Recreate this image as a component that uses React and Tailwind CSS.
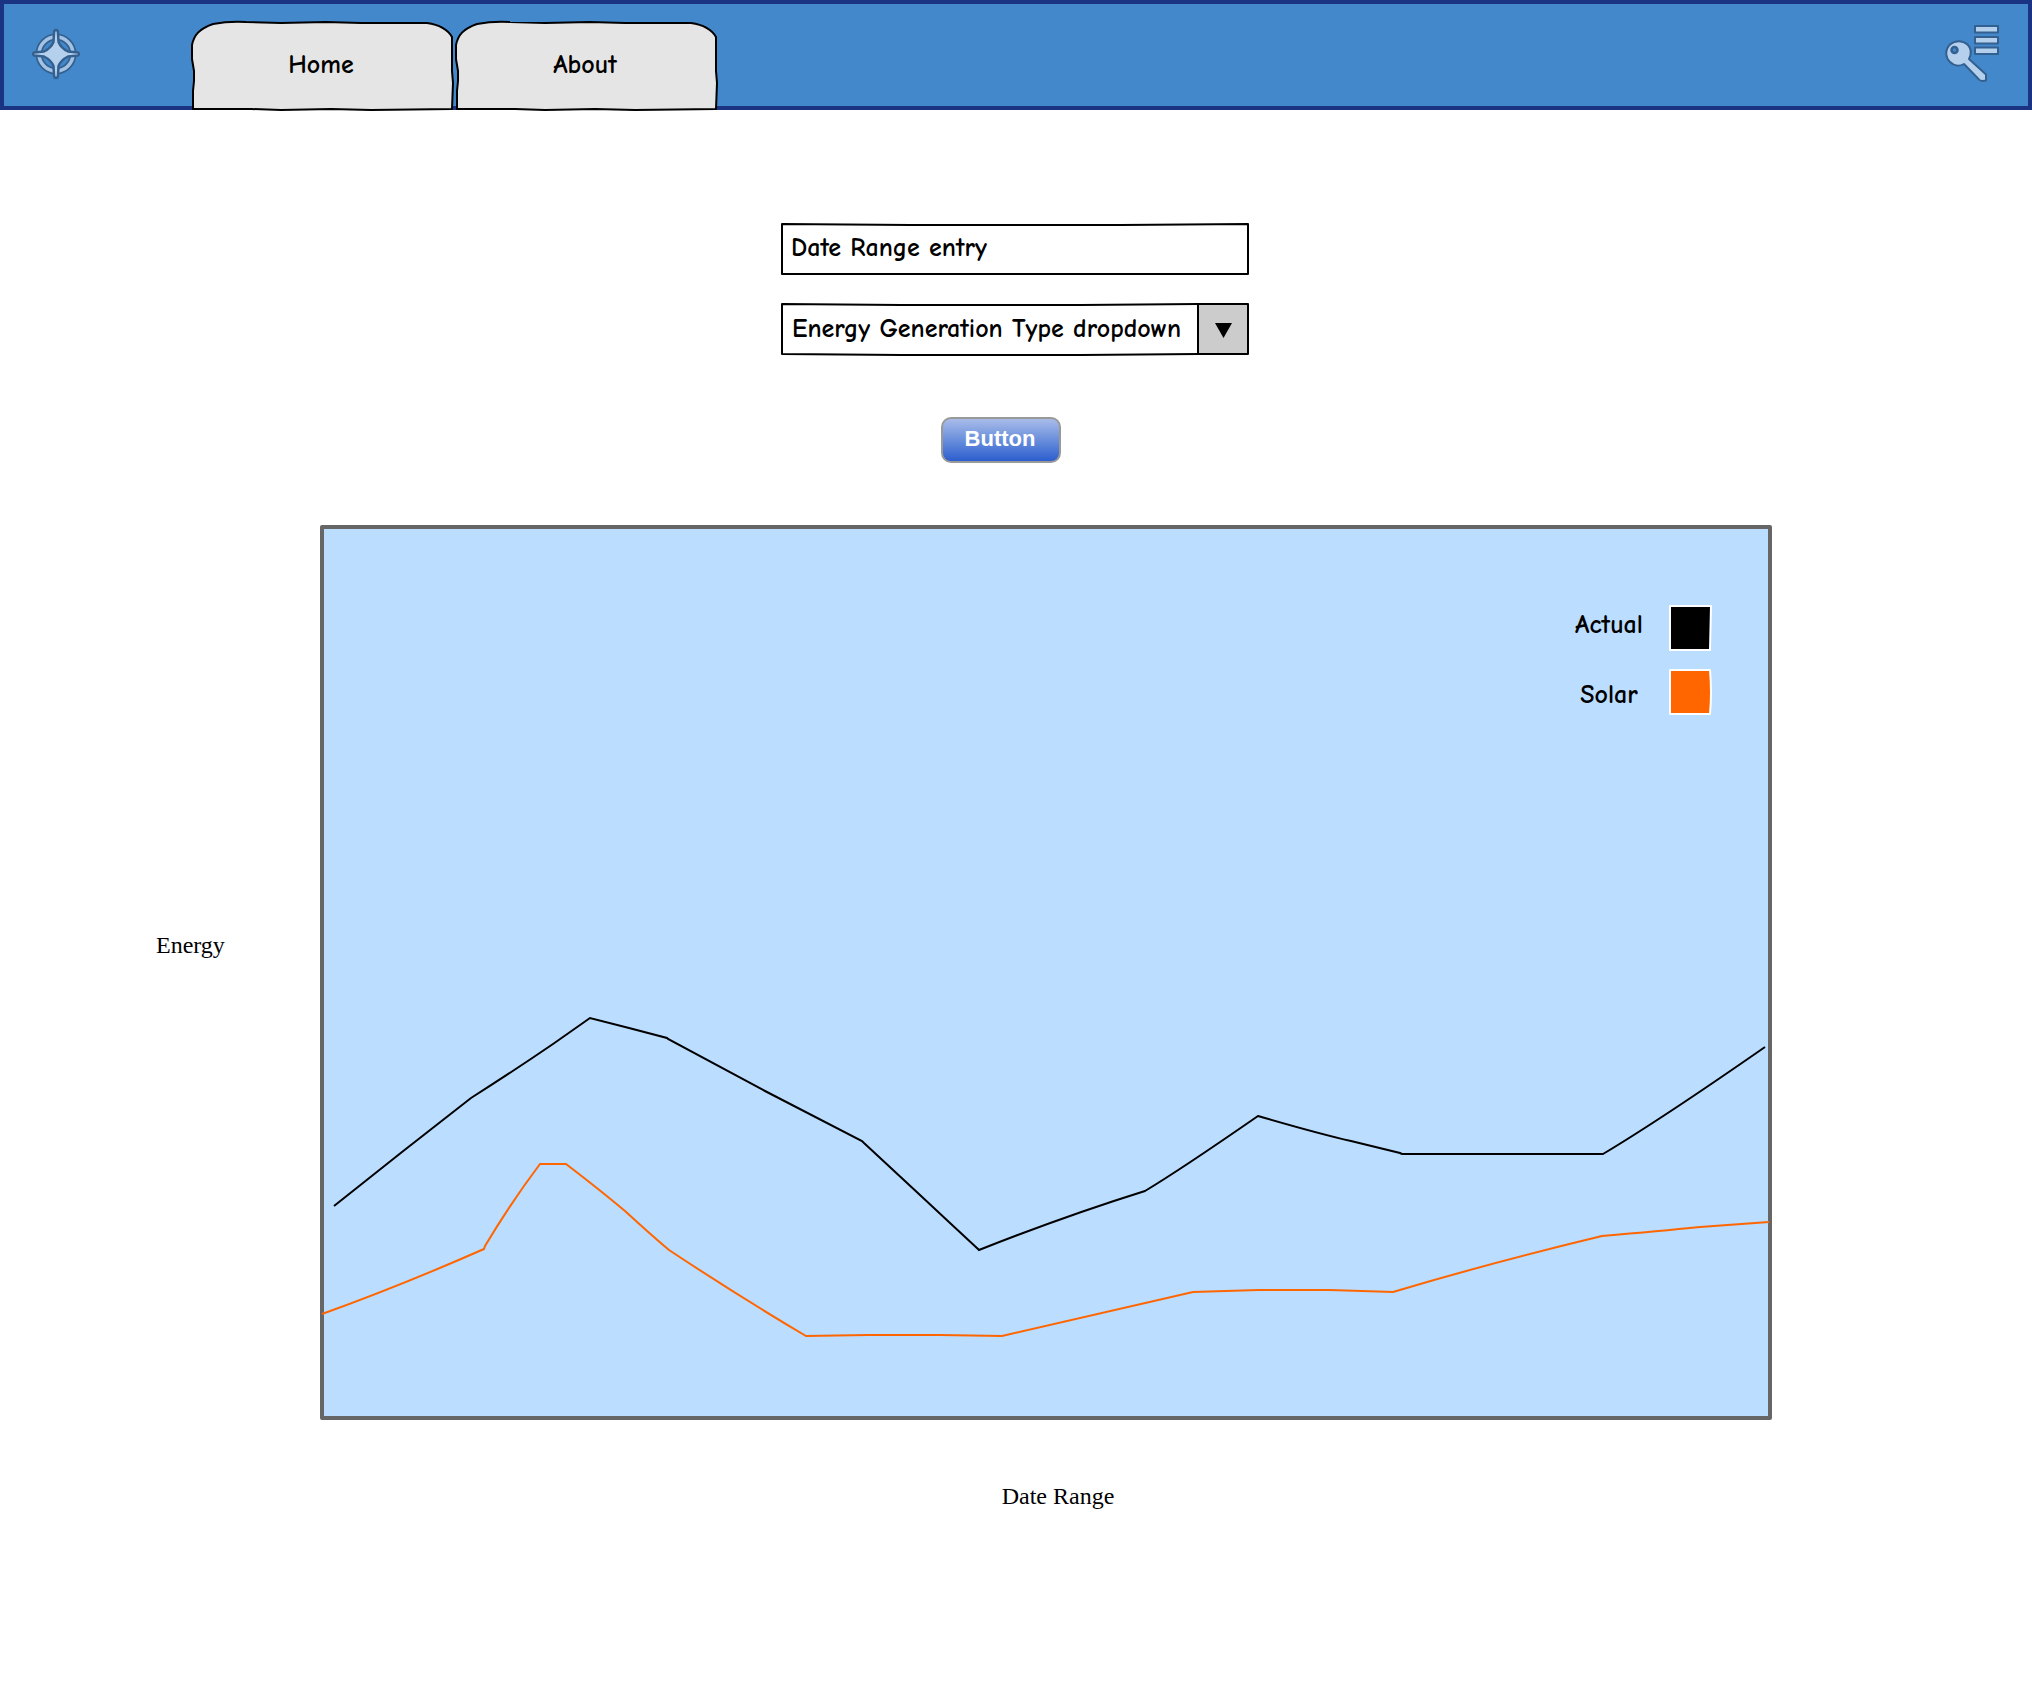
const TAB_PATH =
  "M2 88 L2 70 L3 60 L3 50 L1 38 L1 24 C3 14 8 8 22 3 Q38 0 55 1 L90 2 L135 1 L170 2 L236 2 C250 4 257 9 261 16 L261 50 L262 62 L261 88 L180 89 L140 88 L90 89 L60 88 Z";

function Tab({ children }) {
  return (
    <a
      href="#"
      className="relative isolate flex h-[89px] w-[264px] items-center justify-center pr-1 font-['Comic_Neue','Comic_Sans_MS',Lato,sans-serif] text-[26px] font-bold text-black"
    >
      <svg
        aria-hidden="true"
        className="absolute inset-0 -z-10 h-full w-full overflow-visible"
        viewBox="0 0 264 89"
        preserveAspectRatio="none"
      >
        <path d={TAB_PATH} fill="#e5e5e5" stroke="#000" strokeWidth="2" strokeLinejoin="round" />
      </svg>
      {children}
    </a>
  );
}

function CompassIcon() {
  return (
    <svg aria-hidden="true" className="size-13" viewBox="0 0 52 52">
      <circle cx="26" cy="26" r="17" fill="none" stroke="#33608f" strokeWidth="7" />
      <circle cx="26" cy="26" r="17" fill="none" stroke="#a4c2e3" strokeWidth="3.500" />
      <path
        d="M26 2 Q28 2 28 5 L28.500 14 Q31 20 38 23.500 L48 24.500 Q50 26 48 27.500 L38 28.500 Q31 32 28.500 38 L28 47 Q28 50 26 50 Q24 50 24 47 L23.500 38 Q21 32 14 28.500 L4 27.500 Q2 26 4 24.500 L14 23.500 Q21 20 23.500 14 L24 5 Q24 2 26 2 Z"
        fill="#b5d0ed"
        stroke="#33608f"
        strokeWidth="2.500"
        strokeLinejoin="round"
      />
    </svg>
  );
}

function KeyMenuIcon() {
  return (
    <svg aria-hidden="true" className="h-15 w-14" viewBox="0 0 56 60">
      <g fill="#b5d0ed" stroke="#33608f" strokeWidth="2" strokeLinejoin="round">
        <path d="M25 34 C28 28 27 23 23.500 19.500 C18.500 15 11 15 6 19.500 C1 24.500 1 32 6 37 C10 41 15.500 41.500 20 39 L34.500 54 Q36 56 38.500 56 L42 55.500 L42 49.500 Z" />
        <circle cx="10.500" cy="25" r="3" fill="#4488cc" strokeWidth="2.500" />
        <rect x="31" y="1" width="23" height="6.500" />
        <rect x="31" y="12" width="23" height="6.500" />
        <rect x="31" y="22.500" width="23" height="6.500" />
      </g>
    </svg>
  );
}

function SketchFrame({ d }) {
  return (
    <svg
      aria-hidden="true"
      className="pointer-events-none absolute inset-0 h-full w-full overflow-visible"
      viewBox="0 0 468 52"
      preserveAspectRatio="none"
    >
      <path d={d} fill="none" stroke="#000" strokeWidth="2" strokeLinejoin="round" />
    </svg>
  );
}

function LegendItem({ label, color, align, outline }) {
  return (
    <li className={`flex ${align}`}>
      <span className="w-[72px] text-center leading-10">{label}</span>
      <svg aria-hidden="true" className="ml-6 h-[46px] w-[43px]" viewBox="0 0 43 46">
        <path d={outline} fill={color} stroke="#fff" strokeWidth="2" strokeLinejoin="round" />
      </svg>
    </li>
  );
}

export default function App() {
  return (
    <div className="min-h-screen bg-white text-2xl text-black">
      <header className="flex h-[110px] items-start border-4 border-[#1a3383] bg-[#4488cc]">
        <a href="#" aria-label="Start" className="mt-6 ml-[26px]">
          <CompassIcon />
        </a>
        <nav className="mt-[17px] ml-[109px] flex">
          <Tab>Home</Tab>
          <Tab>About</Tab>
        </nav>
        <button aria-label="Sign in menu" className="mt-[21px] mr-7 ml-auto">
          <KeyMenuIcon />
        </button>
      </header>

      <main>
        <form className="flex flex-col items-center pt-[113px] pr-0.5" onSubmit={(e) => e.preventDefault()}>
          <div className="relative h-[52px] w-[468px]">
            <input
              aria-label="Date range"
              defaultValue="Date Range entry"
              className="h-full w-full bg-transparent pr-2.5 pb-0.5 pl-2.5 font-['Comic_Neue','Comic_Sans_MS',Lato,sans-serif] text-[26px] font-bold outline-none"
            />
            <SketchFrame d="M1 1 L130 2 L340 2 L467 1 L467 51 L1 51 Z" />
          </div>
          <div className="relative mt-7 h-[52px] w-[468px]">
            <select
              aria-label="Energy generation type"
              className="h-full w-full appearance-none bg-transparent pr-14 pl-[11px] font-['Comic_Neue','Comic_Sans_MS',Lato,sans-serif] text-[26px] font-bold outline-none"
            >
              <option>Energy Generation Type dropdown</option>
            </select>
            <span className="pointer-events-none absolute inset-y-px right-px flex w-[51px] items-center justify-center border-l-2 border-black bg-[#cccccc] pt-0.5">
              <svg aria-hidden="true" className="h-[15px] w-[17px]" viewBox="0 0 17 15">
                <path d="M0 0 H17 L8.500 15 Z" />
              </svg>
            </span>
            <SketchFrame d="M1 1 L120 2 L300 2 L418 1 L467 1 L467 51 L418 51 L300 52 L120 52 L1 51 Z" />
          </div>
          <button className="mt-[62px] mr-7 h-[46px] w-[120px] rounded-[10px] border-2 border-[#999999] bg-linear-to-b from-[#a9bce8] to-[#2b5dcd] pr-0.5 pb-0.5 font-['Liberation_Sans',Arial,sans-serif] text-[22px] leading-none font-bold text-white">
            Button
          </button>
        </form>

        <section className="mt-[62px] grid grid-cols-[320px_1fr_260px] items-center font-['Liberation_Serif','Times_New_Roman',serif]">
          <span className="mt-[-56px] pl-[156px]">Energy</span>
          <figure className="relative rounded-xs border-4 border-[#666666] bg-[#bbddff]">
            <svg
              role="img"
              aria-label="Energy over date range"
              className="block h-auto w-full overflow-visible"
              viewBox="324 529 1444 887"
            >
              <path
                d="M334 1206 L402 1152 L471 1098 Q515 1070 553 1044 L590 1018 L629 1028 L667 1038 L668 1039 L765 1091 L862 1141 L864 1143 L920 1195 L950 1223 L978 1249 L979 1250 Q1065 1216 1145 1191 Q1180 1170 1258 1116 Q1320 1134 1351 1141 L1400 1153 L1402 1154 L1603 1154 Q1660 1120 1765 1047"
                fill="none"
                stroke="#000"
                strokeWidth="2"
              />
              <path
                d="M322 1314 Q400 1286 484 1249 L485 1246 Q512 1201 540 1164 L566 1164 Q600 1190 625 1211 Q650 1234 669 1250 Q740 1297 806 1336 L868 1335 L940 1335 L1002 1336 Q1095 1315 1193 1292 L1258 1290 L1330 1290 L1393 1292 Q1490 1263 1602 1236 Q1660 1231 1700 1227 L1769 1222"
                fill="none"
                stroke="#ff6600"
                strokeWidth="2"
              />
            </svg>
            <ul className="absolute top-[76px] right-[56px] grid gap-[18px] font-['Comic_Neue','Comic_Sans_MS',Lato,sans-serif] text-[26px] font-bold">
              <LegendItem label="Actual" color="#000000" align="items-start" outline="M1 1 L42 1 L41 45 L20 45 L1 45 Z" />
              <LegendItem label="Solar" color="#ff6600" align="items-end" outline="M1 1 L41 1 Q43 24 41 45 L20 45 L1 45 Z" />
            </ul>
            <figcaption className="absolute top-full mt-16 w-full pl-6 text-center">Date Range</figcaption>
          </figure>
        </section>
      </main>
    </div>
  );
}
